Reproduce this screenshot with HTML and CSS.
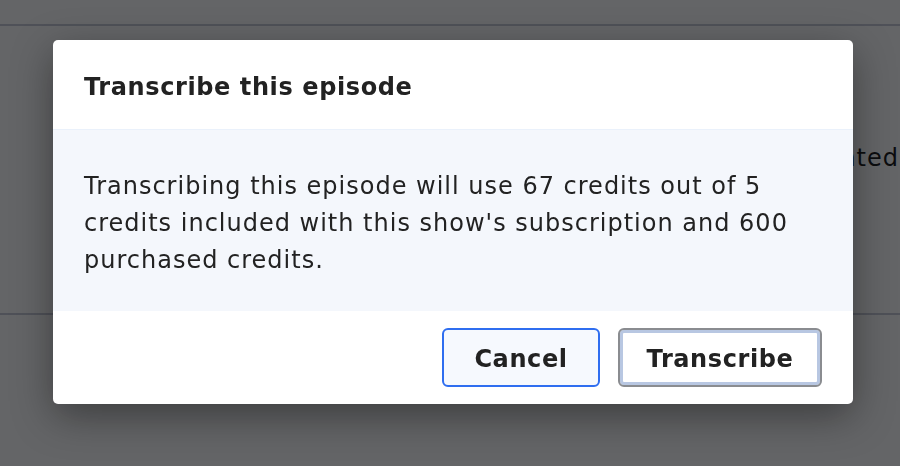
FILE: index.html
```html
<!DOCTYPE html>
<html>
<head>
<meta charset="utf-8">
<link rel="stylesheet" href="styles.css">
</head>
<body>
<div class="page">
  <div class="topbar"></div>
  <div class="section">
    <p class="section-text">Transcript generated</p>
  </div>
</div>
<div class="overlay"></div>
<div class="dialog" role="dialog">
  <div class="dialog-header">
    <h2 class="dialog-title">Transcribe this episode</h2>
  </div>
  <div class="dialog-body">
    <p class="dialog-text">Transcribing this episode will use 67 credits out of 5 credits included with this show's subscription and 600 purchased credits.</p>
  </div>
  <div class="dialog-footer">
    <button class="btn btn-cancel">Cancel</button>
    <button class="btn btn-primary">Transcribe</button>
  </div>
</div>
</body>
</html>
```
FILE: styles.css
```css
html, body {
  margin: 0;
  padding: 0;
  width: 900px;
  height: 466px;
  overflow: hidden;
  font-family: "DejaVu Sans", "Noto Sans", sans-serif;
}
.page {
  background: #ffffff;
  height: 466px;
}
.topbar {
  height: 24px;
  border-bottom: 2px solid #c6c9d6;
}
.section {
  height: 287px;
  border-bottom: 2px solid #c6c9d6;
  display: flex;
  justify-content: flex-end;
  align-items: flex-start;
}
.section-text {
  margin: 118px 1px 0 0;
  font-size: 24px;
  letter-spacing: 1px;
  color: #111;
  white-space: nowrap;
}
.overlay {
  position: fixed;
  inset: 0;
  background: rgba(10, 11, 14, 0.63);
}
.dialog {
  position: fixed;
  left: 53px;
  top: 40px;
  width: 800px;
  background: #fff;
  border-radius: 5px;
  overflow: hidden;
  box-shadow: 0 12px 40px rgba(0, 0, 0, 0.4);
  color: #222;
}
.dialog-header {
  height: 90px;
  display: flex;
  align-items: center;
  padding: 0 31px;
  border-bottom: 1px solid #eaf1fb;
  box-sizing: border-box;
}
.dialog-title {
  margin: 4px 0 0;
  font-size: 24px;
  font-weight: 700;
  letter-spacing: 0.6px;
}
.dialog-body {
  background: #f4f7fc;
  padding: 38px 31px 32px;
  height: 181px;
  box-sizing: border-box;
}
.dialog-text {
  margin: 0;
  font-size: 24px;
  line-height: 37px;
  letter-spacing: 1px;
  color: #222;
}
.dialog-footer {
  display: flex;
  justify-content: flex-end;
  gap: 18px;
  padding: 17px 31px 17px;
}
.btn {
  height: 59px;
  padding: 3px 0 0;
  font-family: inherit;
  font-size: 24px;
  font-weight: 700;
  letter-spacing: 0.6px;
  color: #222;
  border-radius: 6px;
  cursor: pointer;
}
.btn-cancel {
  width: 158px;
  background: #f6f9fe;
  border: 2px solid #2f6ef0;
}
.btn-primary {
  width: 204px;
  background: #fff;
  border: 2px solid #8a8c90;
  box-shadow: inset 0 0 0 3px #b8c7e2;
}
```
